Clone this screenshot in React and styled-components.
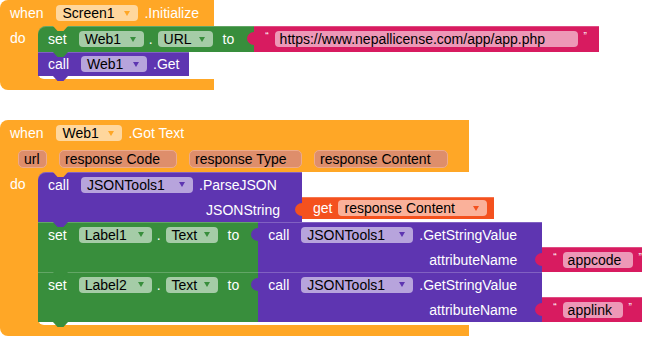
import React from 'react';
import styled, { createGlobalStyle } from 'styled-components';

const C = {
  orange: '#ffa726',
  green: '#388e3c',
  purple: '#5e35b1',
  pink: '#d81b60',
  get: '#f4511e',
};

const Global = createGlobalStyle`
  html, body { margin: 0; padding: 0; background: #fff; }
  body { font-family: "Liberation Sans", Arial, sans-serif; font-size: 14px; }
`;

const Workspace = styled.div`
  display: flex;
  flex-direction: column;
  align-items: flex-start;
  gap: 30px;
`;

const Event = styled.div`
  display: flex;
  flex-direction: column;
  width: ${(p) => p.$w}px;
`;

const HeadRow = styled.div`
  display: flex;
  align-items: center;
  height: 26px;
  padding-left: ${(p) => p.$pl || 10}px;
  gap: ${(p) => p.$gap || 6}px;
  background: ${C.orange};
  color: #fff;
  white-space: nowrap;
  ${(p) => p.$first && 'border-top-left-radius: 8px;'}
`;

const Body = styled.div`
  display: flex;
  background: ${C.orange};
`;

const DoCol = styled.div`
  width: 38px;
  flex: none;
  box-sizing: border-box;
  padding-left: 10px;
  color: #fff;
  line-height: 24px;
`;

const Slot = styled.div`
  flex: 1;
  min-width: 0;
  position: relative;
  display: flex;
  flex-direction: column;
  align-items: flex-start;
  padding-bottom: 3px;
  background: linear-gradient(${C.orange}, ${C.orange}) 0 0 / 8px 8px no-repeat, #fff;
  border-bottom-left-radius: 6px;
  &::before {
    content: '';
    position: absolute;
    left: 15px;
    top: 0;
    width: 15px;
    height: 5px;
    background: ${C.orange};
    clip-path: polygon(0 0, 100% 0, 70% 100%, 30% 100%);
    z-index: 3;
  }
`;

const Foot = styled.div`
  height: 11px;
  background: ${C.orange};
  border-bottom-left-radius: 8px;
`;

const Stmt = styled.div`
  display: flex;
  align-items: stretch;
  position: relative;
  white-space: nowrap;
  &::after {
    content: '';
    position: absolute;
    left: 15px;
    bottom: -5px;
    width: 15px;
    height: 5px;
    background: ${(p) => p.$c};
    clip-path: polygon(0 0, 100% 0, 70% 100%, 30% 100%);
    z-index: 2;
  }
`;

const Shape = styled.div`
  display: flex;
  flex-direction: column;
  box-sizing: border-box;
  background: ${(p) => p.$bg};
  color: #fff;
  padding: 0 ${(p) => p.$pr ?? 10}px 0 ${(p) => p.$pl ?? 10}px;
  ${(p) => p.$w && `width: ${p.$w}px;`}
  ${(p) => p.$first && 'border-top-left-radius: 8px;'}
  box-shadow: inset 0 1px rgba(255, 255, 255, 0.22);
`;

const Line = styled.div`
  display: flex;
  align-items: center;
  justify-content: ${(p) => (p.$end ? 'flex-end' : 'flex-start')};
  gap: ${(p) => p.$gap ?? 6}px;
  height: ${(p) => p.$h || 25}px;
`;

const Value = styled.div`
  position: relative;
  display: flex;
  align-items: flex-start;
  align-self: flex-start;
  white-space: nowrap;
  &::before {
    content: '';
    position: absolute;
    left: -7px;
    top: 6px;
    width: 8px;
    height: 13px;
    background: ${(p) => p.$c};
    border-radius: 7px 0 0 7px / 6.5px 0 0 6.5px;
  }
`;

const Inputs = styled.div`
  display: flex;
  flex-direction: column;
  padding-top: ${(p) => p.$pt || 0}px;
`;

const Word = styled.span`
  margin-right: ${(p) => p.$mr || 0}px;
  margin-left: ${(p) => p.$ml || 0}px;
`;

const Dot = styled.span`
  margin: 0 -1px;
`;

const Pill = styled.span`
  display: inline-flex;
  align-items: center;
  justify-content: space-between;
  box-sizing: border-box;
  height: 16px;
  width: ${(p) => p.$w}px;
  padding: 0 8px 0 ${(p) => (p.$text ? 5 : 6)}px;
  border-radius: 4px;
  background: ${(p) => p.$bg};
  color: #000;
  flex: none;
`;

const Arrow = styled.span`
  flex: none;
  width: 0;
  height: 0;
  border-left: 3.5px solid transparent;
  border-right: 3.5px solid transparent;
  border-top: 5px solid ${(p) => p.$c};
`;

const Param = styled.span`
  display: inline-flex;
  align-items: center;
  box-sizing: border-box;
  width: ${(p) => p.$w}px;
  height: 18px;
  padding-left: 5px;
  border: 1px solid #eeaa8a;
  border-radius: 5px;
  background: #de8e6b;
  color: #000;
  flex: none;
`;

const Quote = styled.span`
  font-size: 10px;
  line-height: 1;
  align-self: flex-start;
  margin-top: 6px;
  color: #fff;
`;

const light = (c) => {
  const n = parseInt(c.slice(1), 16);
  const r = (n >> 16) & 255, g = (n >> 8) & 255, b = n & 255;
  const m = (x) => Math.round(x * 0.45 + 255 * 0.55);
  return `rgb(${m(r)},${m(g)},${m(b)})`;
};

const Drop = ({ c, w, children }) => (
  <Pill $bg={light(c)} $w={w}>
    <span>{children}</span>
    <Arrow $c={c} />
  </Pill>
);

const Str = ({ text, h = 25, w, pw }) => (
  <Value $c={C.pink}>
    <Shape $bg={C.pink} $pl={11} $pr={8} $w={w}>
      <Line $h={h} $gap={6}>
        <Quote>“</Quote>
        <Pill $text $bg={light(C.pink)} $w={pw}>{text}</Pill>
        <Quote>”</Quote>
      </Line>
    </Shape>
  </Value>
);

const GetStringValue = ({ attr, pw }) => (
  <Value $c={C.purple}>
    <Shape $bg={C.purple} $w={284} $pr={25}>
      <Line>
        <Word $mr={6}>call</Word>
        <Drop c={C.purple} w={112}>JSONTools1</Drop>
        <span>.GetStringValue</span>
      </Line>
      <Line $end>attributeName</Line>
    </Shape>
    <Inputs $pt={25}>
      <Str text={attr} w={100} pw={pw} />
    </Inputs>
  </Value>
);

const SetLabel = ({ label, attr, pw }) => (
  <Stmt $c={C.green}>
    <Shape $bg={C.green} $pr={19}>
      <Line>
        <Word $mr={6}>set</Word>
        <Drop c={C.green} w={73}>{label}</Drop>
        <Dot>.</Dot>
        <Drop c={C.green} w={52}>Text</Drop>
        <Word $ml={4}>to</Word>
      </Line>
    </Shape>
    <GetStringValue attr={attr} pw={pw} />
  </Stmt>
);

export default function App() {
  return (
    <>
      <Global />
      <Workspace>
        <Event $w={214}>
          <HeadRow $first>
            <Word $mr={7}>when</Word>
            <Drop c={C.orange} w={82}>Screen1</Drop>
            <span>.Initialize</span>
          </HeadRow>
          <Body>
            <DoCol>do</DoCol>
            <Slot>
              <Stmt $c={C.green}>
                <Shape $bg={C.green} $pr={20} $first>
                  <Line $h={26}>
                    <Word $mr={6}>set</Word>
                    <Drop c={C.green} w={65}>Web1</Drop>
                    <Dot>.</Dot>
                    <Drop c={C.green} w={55}>URL</Drop>
                    <Word $ml={4}>to</Word>
                  </Line>
                </Shape>
                <Str text="https://www.nepallicense.com/app/app.php" h={26} w={345} pw={303} />
              </Stmt>
              <Stmt $c={C.purple}>
                <Shape $bg={C.purple}>
                  <Line $h={24}>
                    <Word $mr={6}>call</Word>
                    <Drop c={C.purple} w={66}>Web1</Drop>
                    <span>.Get</span>
                  </Line>
                </Shape>
              </Stmt>
            </Slot>
          </Body>
          <Foot />
        </Event>

        <Event $w={469}>
          <HeadRow $first>
            <Word $mr={7}>when</Word>
            <Drop c={C.orange} w={66}>Web1</Drop>
            <span>.Got Text</span>
          </HeadRow>
          <HeadRow $pl={18} $gap={12}>
            <Param $w={29}>url</Param>
            <Param $w={118}>response Code</Param>
            <Param $w={113}>response Type</Param>
            <Param $w={134}>response Content</Param>
          </HeadRow>
          <Body>
            <DoCol>do</DoCol>
            <Slot>
              <Stmt $c={C.purple}>
                <Shape $bg={C.purple} $w={264} $pr={22} $first>
                  <Line>
                    <Word $mr={6}>call</Word>
                    <Drop c={C.purple} w={112}>JSONTools1</Drop>
                    <span>.ParseJSON</span>
                  </Line>
                  <Line $end>JSONString</Line>
                </Shape>
                <Inputs $pt={25}>
                  <Value $c={C.get}>
                    <Shape $bg={C.get} $pl={11} $pr={7}>
                      <Line $h={22}>
                        <span>get</span>
                        <Drop c={C.get} w={149}>response Content</Drop>
                      </Line>
                    </Shape>
                  </Value>
                </Inputs>
              </Stmt>
              <SetLabel label="Label1" attr="appcode" pw={70} />
              <SetLabel label="Label2" attr="applink" pw={60} />
            </Slot>
          </Body>
          <Foot />
        </Event>
      </Workspace>
    </>
  );
}
